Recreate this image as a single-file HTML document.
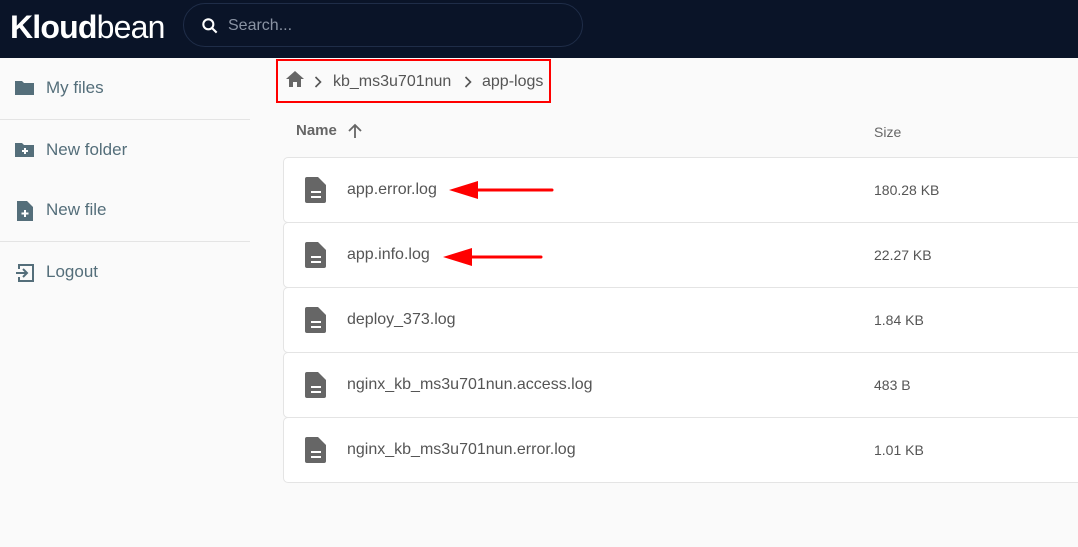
<!DOCTYPE html>
<html><head><style>
*{margin:0;padding:0;box-sizing:border-box}
body{width:1078px;height:547px;overflow:hidden;background:#fafafa;font-family:"Liberation Sans",Arial,sans-serif;position:relative}
.top{position:absolute;left:0;top:0;width:1078px;height:58px;background:#0a1428}
.logo{position:absolute;left:10px;top:9px;color:#fff;font-size:32px;letter-spacing:-0.8px}
.search{position:absolute;left:183px;top:3px;width:400px;height:44px;border:1px solid #1f2d48;border-radius:22px;background:#0a1428}
.search span{position:absolute;left:44px;top:13px;color:#8a93a3;font-size:16px}
.side{position:absolute;left:0;top:58px;width:250px;height:489px}
.it{position:absolute;left:46px;color:#546e7a;font-size:17px}
.ic{position:absolute;left:14px}
.hr{position:absolute;left:0;width:250px;height:1px;background:#e4e4e4}
.bc{position:absolute;left:276px;top:59px;width:275px;height:44px;border:2px solid #f00}
.bc span{position:absolute;top:12px;font-size:16px;color:#555}
.row{position:absolute;left:283px;width:800px;height:66px;background:#fff;border:1px solid #e4e4e4;border-radius:5px}
.row .n{position:absolute;left:63px;top:23px;font-size:16px;color:#555}
.row .s{position:absolute;left:590px;top:24px;font-size:14px;color:#555}
.row svg{position:absolute;left:19px;top:18px}
</style></head><body>
<div class="top">
<div class="logo"><b>Kloud</b>bean</div>
<div class="search"><svg style="position:absolute;left:16px;top:12px" width="20" height="20" viewBox="0 0 24 24"><circle cx="10" cy="10" r="6" stroke="#fff" stroke-width="2.5" fill="none"/><path d="M14.5 14.5L20 20" stroke="#fff" stroke-width="2.5"/></svg><span>Search...</span></div>
</div>
<div class="side">
<svg class="ic" style="top:20px" width="22" height="20" viewBox="0 0 22 20"><path d="M1 3h7l2 2h10v12H1z" fill="#546e7a"/></svg>
<div class="it" style="top:20px">My files</div>
<div class="hr" style="top:61px"></div>
<svg class="ic" style="top:82px" width="22" height="20" viewBox="0 0 22 20"><path d="M1 3h7l2 2h10v12H1z" fill="#546e7a"/><path d="M11 8v6M8 11h6" stroke="#fff" stroke-width="2"/></svg>
<div class="it" style="top:82px">New folder</div>
<svg class="ic" style="top:142px;left:16px" width="18" height="22" viewBox="0 0 18 22"><path d="M1 1h10l6 6v14H1z" fill="#546e7a"/><path d="M9 10v7M5.5 13.5h7" stroke="#fff" stroke-width="2"/></svg>
<div class="it" style="top:142px">New file</div>
<div class="hr" style="top:183px"></div>
<svg class="ic" style="top:204px" width="22" height="22" viewBox="0 0 22 22"><path d="M5 7V3h14v16H5v-4" stroke="#546e7a" stroke-width="2" fill="none"/><path d="M2 11h11M9 7l4 4-4 4" stroke="#546e7a" stroke-width="2" fill="none"/></svg>
<div class="it" style="top:204px">Logout</div>
</div>
<div class="bc">
<svg style="position:absolute;left:7px;top:9px" width="20" height="18" viewBox="0 0 20 18"><path d="M10 1L1 9h3v8h4v-5h4v5h4V9h3z" fill="#666"/></svg>
<svg style="position:absolute;left:36px;top:15px" width="8" height="12" viewBox="0 0 8 12"><path d="M1.5 1l5 5-5 5" stroke="#555" stroke-width="1.6" fill="none"/></svg>
<span style="left:55px">kb_ms3u701nun</span>
<svg style="position:absolute;left:186px;top:15px" width="8" height="12" viewBox="0 0 8 12"><path d="M1.5 1l5 5-5 5" stroke="#555" stroke-width="1.6" fill="none"/></svg>
<span style="left:204px">app-logs</span>
</div>
<div style="position:absolute;left:296px;top:122px;font-size:15px;font-weight:bold;color:#666">Name</div>
<svg style="position:absolute;left:347px;top:123px" width="16" height="16" viewBox="0 0 16 16"><path d="M8 15V2M2 8l6-6 6 6" stroke="#666" stroke-width="1.8" fill="none"/></svg>
<div style="position:absolute;left:874px;top:124px;font-size:14px;color:#666">Size</div>
<div class="row" style="top:157px"><svg width="26" height="28" viewBox="0 0 26 28"><path d="M4 1h11l8 8v16a2 2 0 0 1-2 2H4a2 2 0 0 1-2-2V3a2 2 0 0 1 2-2z" fill="#666"/><path d="M8 16h10M8 21h10" stroke="#fff" stroke-width="2"/></svg><div class="n">app.error.log</div><div class="s">180.28 KB</div></div>
<div class="row" style="top:222px"><svg width="26" height="28" viewBox="0 0 26 28"><path d="M4 1h11l8 8v16a2 2 0 0 1-2 2H4a2 2 0 0 1-2-2V3a2 2 0 0 1 2-2z" fill="#666"/><path d="M8 16h10M8 21h10" stroke="#fff" stroke-width="2"/></svg><div class="n">app.info.log</div><div class="s">22.27 KB</div></div>
<div class="row" style="top:287px"><svg width="26" height="28" viewBox="0 0 26 28"><path d="M4 1h11l8 8v16a2 2 0 0 1-2 2H4a2 2 0 0 1-2-2V3a2 2 0 0 1 2-2z" fill="#666"/><path d="M8 16h10M8 21h10" stroke="#fff" stroke-width="2"/></svg><div class="n">deploy_373.log</div><div class="s">1.84 KB</div></div>
<div class="row" style="top:352px"><svg width="26" height="28" viewBox="0 0 26 28"><path d="M4 1h11l8 8v16a2 2 0 0 1-2 2H4a2 2 0 0 1-2-2V3a2 2 0 0 1 2-2z" fill="#666"/><path d="M8 16h10M8 21h10" stroke="#fff" stroke-width="2"/></svg><div class="n">nginx_kb_ms3u701nun.access.log</div><div class="s">483 B</div></div>
<div class="row" style="top:417px"><svg width="26" height="28" viewBox="0 0 26 28"><path d="M4 1h11l8 8v16a2 2 0 0 1-2 2H4a2 2 0 0 1-2-2V3a2 2 0 0 1 2-2z" fill="#666"/><path d="M8 16h10M8 21h10" stroke="#fff" stroke-width="2"/></svg><div class="n">nginx_kb_ms3u701nun.error.log</div><div class="s">1.01 KB</div></div>
<svg style="position:absolute;left:0;top:0" width="1078" height="547"><path d="M475 190H552" stroke="#f00" stroke-width="3" stroke-linecap="round"/><path d="M449 190l29-9v18z" fill="#f00"/><path d="M470 257H541" stroke="#f00" stroke-width="3" stroke-linecap="round"/><path d="M443 257l29-9v18z" fill="#f00"/></svg>
</body></html>
